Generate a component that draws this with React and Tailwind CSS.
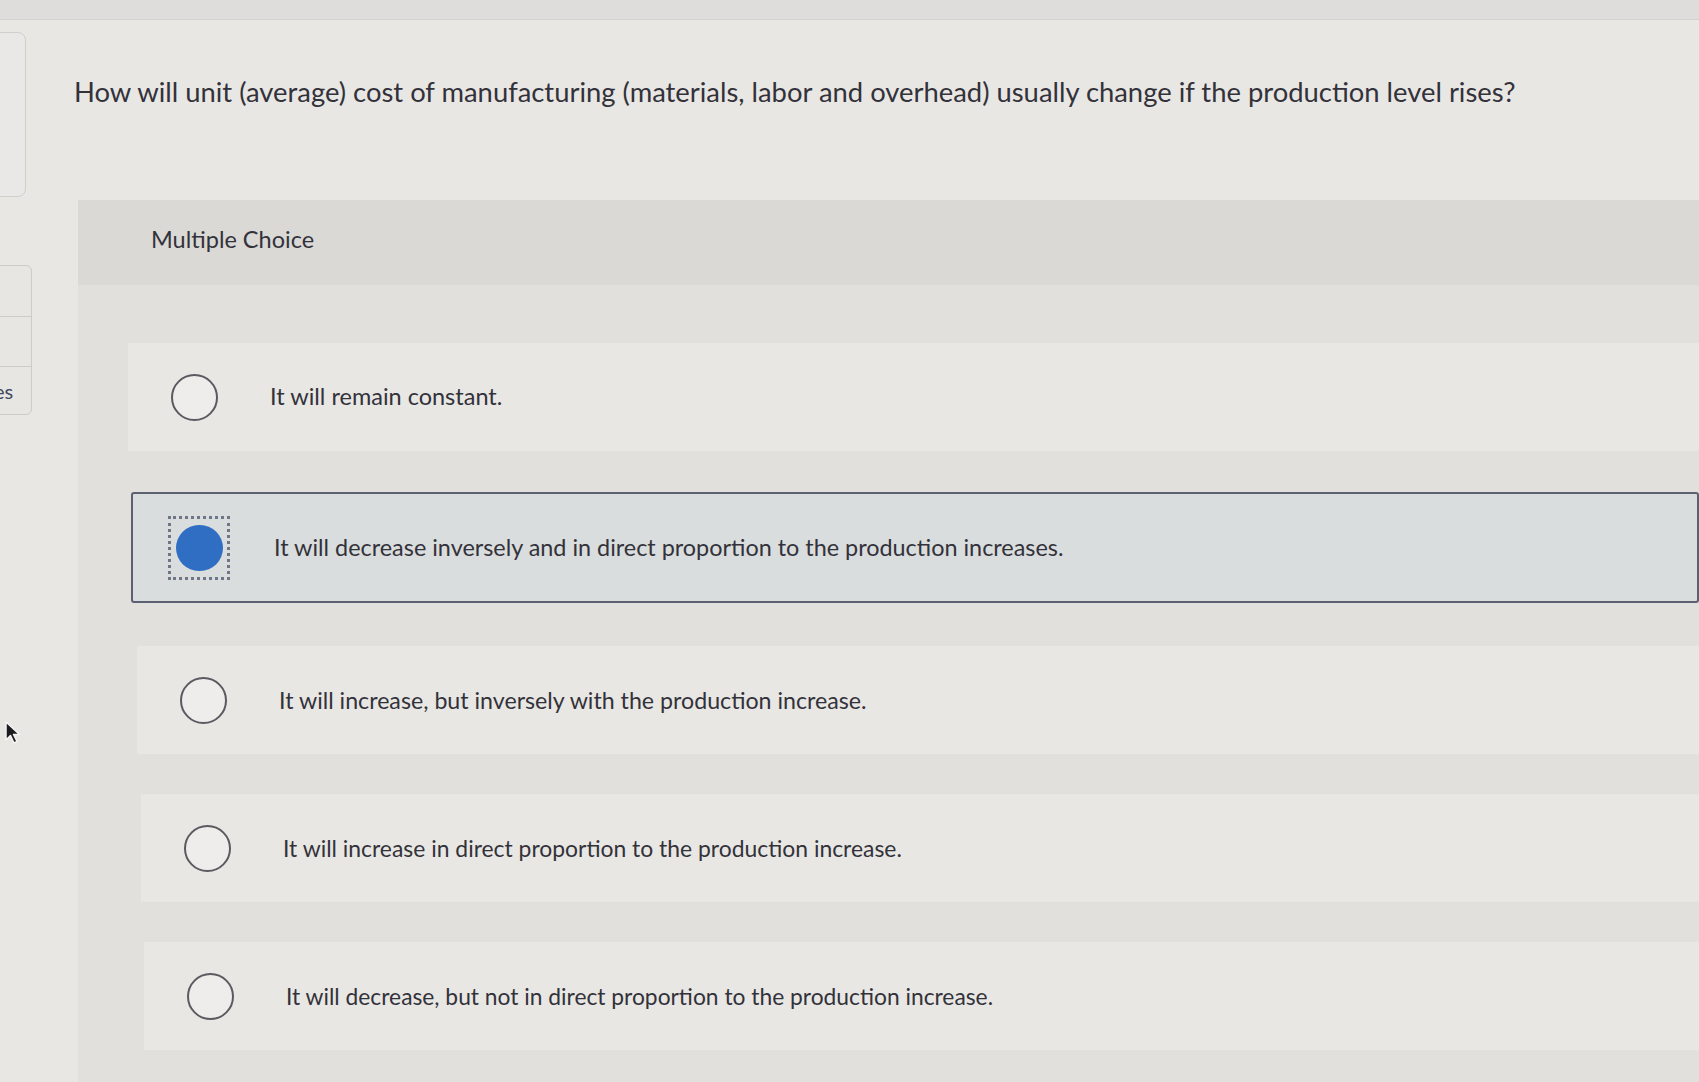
import React from "react";

const options = [
  { text: "It will remain constant.", ml: "ml-[50px]", mt: "mt-[58px]", fs: "text-[23.5px]", selected: false },
  { text: "It will decrease inversely and in direct proportion to the production increases.", ml: "ml-[53px]", mt: "mt-[41px]", fs: "text-[23.4px]", selected: true },
  { text: "It will increase, but inversely with the production increase.", ml: "ml-[59px]", mt: "mt-[43px]", fs: "text-[23.2px]", selected: false },
  { text: "It will increase in direct proportion to the production increase.", ml: "ml-[63px]", mt: "mt-[40px]", fs: "text-[22.9px]", selected: false },
  { text: "It will decrease, but not in direct proportion to the production increase.", ml: "ml-[66px]", mt: "mt-[40px]", fs: "text-[22.8px]", selected: false },
];

function Radio({ selected }) {
  if (selected) {
    return (
      <div className="w-[62px] h-[64px] shrink-0 border-[3px] border-dotted border-[#6f7686] flex items-center justify-center -ml-[8px] mr-[-8px]">
        <div className="w-[47px] h-[46px] rounded-full bg-[#2f6ec3]" />
      </div>
    );
  }
  return <div className="w-[47px] h-[47px] shrink-0 rounded-full border-2 border-[#5b5a60] bg-[#eeedeb]" />;
}

export default function App() {
  return (
    <div className="w-[1699px] h-[1082px] overflow-hidden bg-[#e8e7e4] font-['Lato','Liberation_Sans',sans-serif] text-[#33323a] relative">
      <div className="h-[20px] bg-[#dedddb] border-b border-[#d3d2cf]" />
      <div className="flex">
        {/* left sidebar */}
        <div className="w-[30px] shrink-0 flex flex-col">
          <div className="mt-[12px] h-[165px] w-[36px] -ml-[10px] rounded-lg border border-[#d0cfcc] bg-[#e9e8e6]" />
          <div className="mt-[68px] h-[150px] w-[42px] -ml-[10px] rounded-md border border-[#cdccc9] bg-[#e7e6e3] flex flex-col">
            <div className="h-[51px] border-b border-[#cdccc9]" />
            <div className="h-[50px] border-b border-[#cdccc9]" />
            <div className="flex-1 flex items-center pl-[3px] text-[20px] text-[#3f4a5c]">es</div>
          </div>
          <div className="mt-[305px] ml-[4px]">
            <svg width="18" height="26" viewBox="0 0 18 26">
              <path d="M2 2 L2 20 L6.5 15.5 L10 23 L13 21.5 L9.5 14.5 L15.5 14.5 Z" fill="#1c1c1e" stroke="#f4f4f4" strokeWidth="1.5" strokeLinejoin="round" />
            </svg>
          </div>
        </div>
        {/* main */}
        <div className="flex-1 flex flex-col min-w-0">
          <h1 className="mt-[54px] pl-[44px] text-[27.4px] leading-[36px] font-normal whitespace-nowrap">
            How will unit (average) cost of manufacturing (materials, labor and overhead) usually change if the production level rises?
          </h1>
          <div className="mt-[90px] ml-[48px] bg-[#e1e0dd] h-[900px] flex flex-col">
            <div className="h-[85px] bg-[#dad9d6] flex items-center pl-[73px] text-[23.5px] pb-[6px]">
              Multiple Choice
            </div>
            {options.map((o, i) => (
              <div
                key={i}
                className={
                  o.selected
                    ? `${o.mt} ${o.ml} h-[111px] bg-[#dadddd] border-2 border-[#5c6172] rounded-[3px] flex items-center pl-[43px]`
                    : `${o.mt} ${o.ml} h-[108px] bg-[#e8e7e4] flex items-center pl-[43px]`
                }
              >
                <Radio selected={o.selected} />
                <span className={`ml-[52px] ${o.fs} whitespace-nowrap`}>{o.text}</span>
              </div>
            ))}
          </div>
        </div>
      </div>
    </div>
  );
}
